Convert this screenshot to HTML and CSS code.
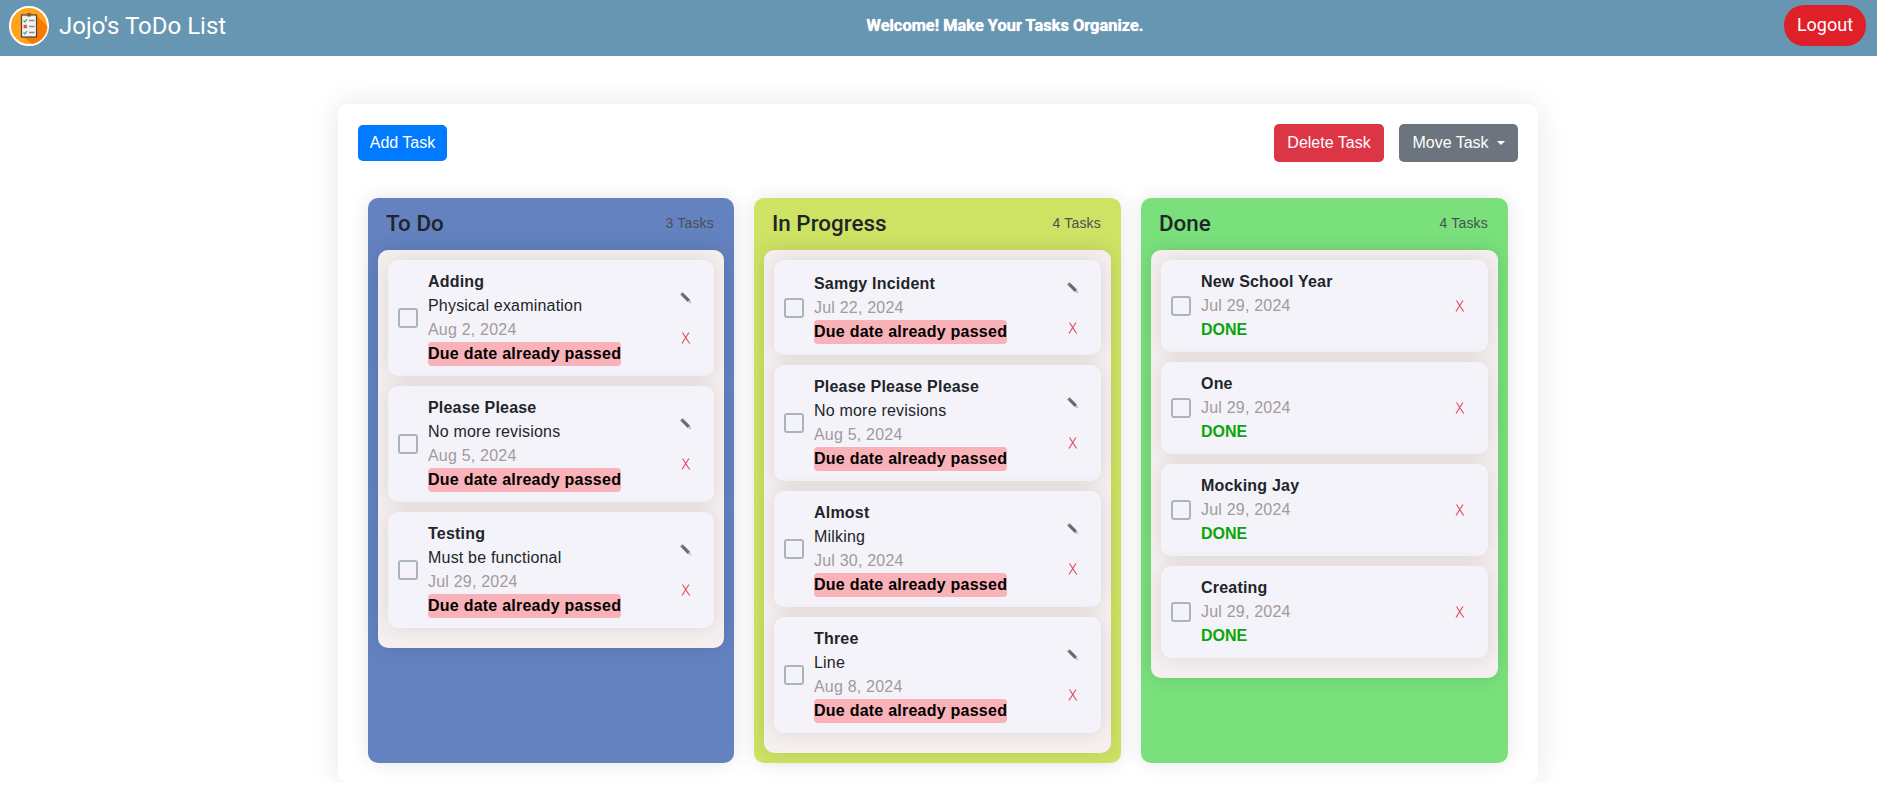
FILE: index.html
```html
<!DOCTYPE html>
<html lang="en">
<head>
  <meta charset="UTF-8" />
  <title>Jojo's ToDo List</title>
  <meta name="viewport" content="width=device-width, initial-scale=1">
  <link rel="stylesheet" href="styles.css">
</head>
<body>
  <svg class="sprites" width="0" height="0">
    <symbol id="pencil" viewBox="0 0 12 12">
      <path d="M0.200 2.500L2.500 0.200L3.600 1.300L1.300 3.600Z" fill="#8a6a50"/>
      <path d="M1.300 3.600L3.600 1.300L10 7.700L7.700 10Z" fill="#5f6b76"/>
      <path d="M7.700 10L10 7.700L11.500 11.500Z" fill="#a9c0d4"/>
    </symbol>
    <symbol id="cross" viewBox="0 0 10 12">
      <path d="M1.500 0.500C3.500 3.500 6 8 8.800 11.500M8 0.500C6 3.500 3.500 7.500 1 11.500" fill="none" stroke="#e4465c" stroke-width="1.100"/>
    </symbol>
  </svg>

  <header class="navbar">
    <div class="brand">
      <svg class="logo" viewBox="0 0 40 40" width="40" height="40">
        <circle cx="20" cy="20" r="19" fill="#ffa31a" stroke="#fff" stroke-width="2"/>
        <path d="M27 9 L38.500 20.500 A18.500 18.500 0 0 1 23 38 L12 29 Z" fill="#f57c00"/>
        <rect x="12.500" y="9" width="15" height="22" fill="#f2f2ee" stroke="#4a4340" stroke-width="1.200"/>
        <rect x="18" y="7" width="4" height="3.500" fill="#8d5a3c"/>
        <path d="M14.500 14.500l1.300 1.300 2.400-2.600M14.500 26.500l1.300 1.300 2.400-2.600" fill="none" stroke="#26a69a" stroke-width="1.200"/>
        <path d="M14.800 19l3 3M17.800 19l-3 3" stroke="#e53935" stroke-width="1.500"/>
        <path d="M20 14.500h5.500M20 20.500h5.500M20 26.500h5.500" stroke="#8a8a8a" stroke-width="1.300"/>
      </svg>
      <span class="brand-name">Jojo's ToDo List</span>
    </div>
    <p class="welcome">Welcome! Make Your Tasks Organize.</p>
    <button class="logout">Logout</button>
  </header>

  <main class="board">
    <div class="toolbar">
      <button class="btn btn-add">Add Task</button>
      <div class="toolbar-right">
        <button class="btn btn-delete">Delete Task</button>
        <button class="btn btn-move">Move Task<span class="caret"></span></button>
      </div>
    </div>

    <div class="columns">
      <section class="column todo">
        <div class="column-head"><h2>To Do</h2><span>3 Tasks</span></div>
        <div class="task-list">
          <div class="task">
            <span class="check"></span>
            <div class="task-text">
              <div class="task-title">Adding</div>
              <div>Physical examination</div>
              <div class="task-date">Aug 2, 2024</div>
              <div><span class="overdue">Due date already passed</span></div>
            </div>
            <div class="task-actions">
              <span class="action"><svg class="icon-pencil"><use href="#pencil"/></svg></span>
              <span class="action"><svg class="icon-cross"><use href="#cross"/></svg></span>
            </div>
          </div>
          <div class="task">
            <span class="check"></span>
            <div class="task-text">
              <div class="task-title">Please Please</div>
              <div>No more revisions</div>
              <div class="task-date">Aug 5, 2024</div>
              <div><span class="overdue">Due date already passed</span></div>
            </div>
            <div class="task-actions">
              <span class="action"><svg class="icon-pencil"><use href="#pencil"/></svg></span>
              <span class="action"><svg class="icon-cross"><use href="#cross"/></svg></span>
            </div>
          </div>
          <div class="task">
            <span class="check"></span>
            <div class="task-text">
              <div class="task-title">Testing</div>
              <div>Must be functional</div>
              <div class="task-date">Jul 29, 2024</div>
              <div><span class="overdue">Due date already passed</span></div>
            </div>
            <div class="task-actions">
              <span class="action"><svg class="icon-pencil"><use href="#pencil"/></svg></span>
              <span class="action"><svg class="icon-cross"><use href="#cross"/></svg></span>
            </div>
          </div>
        </div>
      </section>

      <section class="column progress">
        <div class="column-head"><h2>In Progress</h2><span>4 Tasks</span></div>
        <div class="task-list">
          <div class="task">
            <span class="check"></span>
            <div class="task-text">
              <div class="task-title">Samgy Incident</div>
              <div class="task-date">Jul 22, 2024</div>
              <div><span class="overdue">Due date already passed</span></div>
            </div>
            <div class="task-actions">
              <span class="action"><svg class="icon-pencil"><use href="#pencil"/></svg></span>
              <span class="action"><svg class="icon-cross"><use href="#cross"/></svg></span>
            </div>
          </div>
          <div class="task">
            <span class="check"></span>
            <div class="task-text">
              <div class="task-title">Please Please Please</div>
              <div>No more revisions</div>
              <div class="task-date">Aug 5, 2024</div>
              <div><span class="overdue">Due date already passed</span></div>
            </div>
            <div class="task-actions">
              <span class="action"><svg class="icon-pencil"><use href="#pencil"/></svg></span>
              <span class="action"><svg class="icon-cross"><use href="#cross"/></svg></span>
            </div>
          </div>
          <div class="task">
            <span class="check"></span>
            <div class="task-text">
              <div class="task-title">Almost</div>
              <div>Milking</div>
              <div class="task-date">Jul 30, 2024</div>
              <div><span class="overdue">Due date already passed</span></div>
            </div>
            <div class="task-actions">
              <span class="action"><svg class="icon-pencil"><use href="#pencil"/></svg></span>
              <span class="action"><svg class="icon-cross"><use href="#cross"/></svg></span>
            </div>
          </div>
          <div class="task">
            <span class="check"></span>
            <div class="task-text">
              <div class="task-title">Three</div>
              <div>Line</div>
              <div class="task-date">Aug 8, 2024</div>
              <div><span class="overdue">Due date already passed</span></div>
            </div>
            <div class="task-actions">
              <span class="action"><svg class="icon-pencil"><use href="#pencil"/></svg></span>
              <span class="action"><svg class="icon-cross"><use href="#cross"/></svg></span>
            </div>
          </div>
        </div>
      </section>

      <section class="column done">
        <div class="column-head"><h2>Done</h2><span>4 Tasks</span></div>
        <div class="task-list">
          <div class="task">
            <span class="check"></span>
            <div class="task-text">
              <div class="task-title">New School Year</div>
              <div class="task-date">Jul 29, 2024</div>
              <div class="task-done">DONE</div>
            </div>
            <div class="task-actions">
              <span class="action"><svg class="icon-cross"><use href="#cross"/></svg></span>
            </div>
          </div>
          <div class="task">
            <span class="check"></span>
            <div class="task-text">
              <div class="task-title">One</div>
              <div class="task-date">Jul 29, 2024</div>
              <div class="task-done">DONE</div>
            </div>
            <div class="task-actions">
              <span class="action"><svg class="icon-cross"><use href="#cross"/></svg></span>
            </div>
          </div>
          <div class="task">
            <span class="check"></span>
            <div class="task-text">
              <div class="task-title">Mocking Jay</div>
              <div class="task-date">Jul 29, 2024</div>
              <div class="task-done">DONE</div>
            </div>
            <div class="task-actions">
              <span class="action"><svg class="icon-cross"><use href="#cross"/></svg></span>
            </div>
          </div>
          <div class="task">
            <span class="check"></span>
            <div class="task-text">
              <div class="task-title">Creating</div>
              <div class="task-date">Jul 29, 2024</div>
              <div class="task-done">DONE</div>
            </div>
            <div class="task-actions">
              <span class="action"><svg class="icon-cross"><use href="#cross"/></svg></span>
            </div>
          </div>
        </div>
      </section>
    </div>
  </main>
</body>
</html>
```

FILE: styles.css
```css
/* Reset */
* {
  margin: 0;
  padding: 0;
  box-sizing: border-box;
}

body {
  font-family: "Liberation Sans", Arial, sans-serif;
  font-size: 16px;
  line-height: 24px;
  letter-spacing: 0.2px;
  color: #212529;
  background: #fff;
}

.sprites {
  display: block;
}

/* Navbar */
.navbar {
  height: 56px;
  background: #6796b2;
  display: flex;
  justify-content: space-between;
  align-items: center;
  padding: 0 11px 4px 9px;
  color: #fff;
  font-family: Roboto, sans-serif;
  letter-spacing: 0;
}

.brand {
  display: flex;
  align-items: center;
  gap: 10px;
}

.brand-name {
  font-size: 24px;
  line-height: 36px;
}

.welcome {
  font-weight: 700;
  font-size: 16.4px;
  text-shadow: 0 0 1px #fff;
}

.logout {
  width: 82px;
  height: 41px;
  margin-bottom: 1px;
  padding-bottom: 2px;
  border: none;
  border-radius: 20px;
  background: #e02029;
  color: #fff;
  font-family: Roboto, sans-serif;
  font-size: 18px;
}

/* Board */
.board {
  width: 1200px;
  height: 679px;
  margin: 48px 0 0 338px;
  padding: 20px;
  background: #fff;
  border-radius: 10px;
  box-shadow: 0 0 30px rgba(0, 0, 0, 0.1);
}

.toolbar {
  display: flex;
  justify-content: space-between;
  align-items: center;
  height: 38px;
  margin-bottom: 36px;
  letter-spacing: 0;
}

.toolbar-right {
  display: flex;
  gap: 15px;
}

.btn {
  height: 38px;
  padding: 0 12px;
  border: none;
  border-radius: 5px;
  color: #fff;
  font-family: "Liberation Sans", Arial, sans-serif;
  font-size: 16px;
}

.btn-add {
  width: 89px;
  height: 36px;
  padding: 0;
  background: #007bff;
}

.btn-delete {
  width: 110px;
  background: #dc3545;
}

.btn-move {
  width: 119px;
  background: #6c757d;
}

.caret {
  display: inline-block;
  margin-left: 8px;
  vertical-align: 3px;
  border-top: 4.8px solid #fff;
  border-left: 4.8px solid transparent;
  border-right: 4.8px solid transparent;
}

/* Columns */
.columns {
  display: grid;
  grid-template-columns: 366px 367px 367px;
  gap: 20px;
  height: 565px;
  padding: 0 10px;
}

.column {
  padding: 0 10px;
  border-radius: 10px;
  box-shadow: 0 0 20px rgba(0, 0, 0, 0.1);
}

.todo { background: #6382bf; }
.progress { background: #cee364; }
.done { background: #79e07b; }

.column-head {
  height: 52px;
  display: flex;
  justify-content: space-between;
  align-items: center;
  padding: 0 10px 2px 8px;
  font-size: 14px;
  color: #4a4f55;
}

.column-head h2 {
  font-family: Roboto, sans-serif;
  font-size: 22.4px;
  font-weight: 500;
  letter-spacing: 0;
  color: #212529;
}

.task-list {
  padding: 10px;
  background: #f5f0ef;
  border-radius: 10px;
  box-shadow: 0 0 20px rgba(0, 0, 0, 0.1);
}

.task {
  display: flex;
  align-items: center;
  gap: 10px;
  margin-bottom: 10px;
  padding: 10px;
  background: #f4f3f9;
  border-radius: 10px;
  box-shadow: 0 0 20px rgba(0, 0, 0, 0.1);
}

.check {
  flex: none;
  width: 20px;
  height: 20px;
  border: 2px solid #aab5ba;
  border-radius: 3px;
}

.task-text {
  flex: 1;
}

.task-title {
  font-weight: 700;
}

.task-date {
  color: #a39a9a;
}

.task-done {
  font-weight: 700;
  letter-spacing: 0;
  color: #0aa50a;
}

.overdue {
  display: inline-block;
  background: #f8b2b8;
  color: #000;
  font-weight: 700;
  letter-spacing: 0.24px;
  border-radius: 4px;
}

.task-actions {
  flex: none;
  width: 36px;
  display: flex;
  flex-direction: column;
  gap: 5px;
}

.action {
  height: 35px;
  display: flex;
  align-items: center;
  justify-content: center;
}

.icon-pencil {
  width: 12px;
  height: 12px;
}

.icon-cross {
  width: 10px;
  height: 12px;
}
```
